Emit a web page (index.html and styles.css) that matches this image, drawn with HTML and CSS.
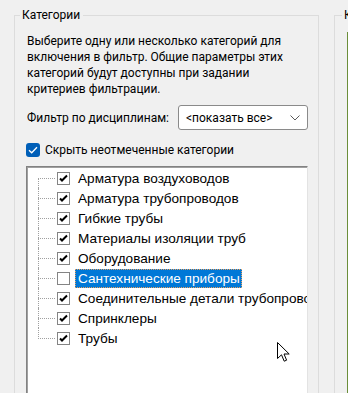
FILE: index.html
```html
<!DOCTYPE html>
<html lang="ru">
<head>
<meta charset="utf-8">
<link rel="stylesheet" href="styles.css">
</head>
<body>
<div class="page">
  <section class="group">
    <span class="group-title">Категории</span>
    <p class="intro">Выберите одну или несколько категорий для включения в фильтр. Общие параметры этих категорий будут доступны при задании критериев фильтрации.</p>
    <div class="filter-row">
      <span class="filter-label">Фильтр по дисциплинам:</span>
      <div class="combo">
        <span class="combo-text">&lt;показать все&gt;</span>
        <svg class="combo-arrow" width="10" height="6" viewBox="0 0 10 6"><path d="M0.5 0.5 L5 5 L9.5 0.5" fill="none" stroke="#5a5a5a" stroke-width="1"/></svg>
      </div>
    </div>
    <label class="hide-row">
      <span class="win-check">
        <svg width="10" height="8" viewBox="0 0 10 8"><path d="M1 4.2 L3.7 6.8 L9 1.2" fill="none" stroke="#fff" stroke-width="1.3"/></svg>
      </span>
      <span>Скрыть неотмеченные категории</span>
    </label>
    <div class="tree">
      <ul class="tree-list">
        <li class="node"><span class="box on"></span><span class="name">Арматура воздуховодов</span></li>
        <li class="node"><span class="box on"></span><span class="name">Арматура трубопроводов</span></li>
        <li class="node"><span class="box on"></span><span class="name">Гибкие трубы</span></li>
        <li class="node"><span class="box on"></span><span class="name">Материалы изоляции труб</span></li>
        <li class="node"><span class="box on"></span><span class="name">Оборудование</span></li>
        <li class="node"><span class="box"></span><span class="name selected">Сантехнические приборы</span></li>
        <li class="node"><span class="box on"></span><span class="name">Соединительные детали трубопроводов</span></li>
        <li class="node"><span class="box on"></span><span class="name">Спринклеры</span></li>
        <li class="node"><span class="box on"></span><span class="name">Трубы</span></li>
      </ul>
      <svg class="cursor" width="14" height="21" viewBox="0 0 14 21"><path d="M0.5 0.5 L0.5 16.5 L4.5 12.8 L7.2 19.2 L9.6 18.2 L7 12 L12.2 12 Z" fill="#fff" stroke="#000" stroke-width="1" stroke-linejoin="miter"/></svg>
    </div>
  </section>
  <section class="group group-2">
    <span class="group-title group-title-2">Категории</span>
    <div class="green-panel"></div>
  </section>
</div>
</body>
</html>
```

FILE: styles.css
```css
html, body {
  margin: 0;
  padding: 0;
  background: #f0f0f0;
  overflow: hidden;
}
body {
  width: 348px;
  height: 393px;
  font-family: Roboto, "Noto Sans", sans-serif;
  font-size: 12px;
  color: #000;
}
.page {
  display: flex;
  gap: 15px;
  padding: 15px 0 0 14px;
  width: 500px;
}
.group {
  display: flex;
  flex-direction: column;
  align-items: flex-start;
  border: 1px solid #dcdcdc;
  padding: 0 11px;
  width: 305px;
  height: 420px;
  box-sizing: border-box;
  flex: none;
}
.group-title {
  margin: -9px 0 0 -6px;
  padding: 0 3px 0 2px;
  background: #f0f0f0;
  line-height: 16px;
  white-space: nowrap;
}
.group-2 {
  width: 100px;
}
.group-title-2 {
  margin-left: -4px;
}
.green-panel {
  margin: 9px 0 0 1px;
  width: 10px;
  height: 400px;
  border-left: 1px solid #6b8e3a;
}
.intro {
  margin: 10px 0 0 1px;
  line-height: 16px;
}
.filter-row {
  display: flex;
  align-items: center;
  margin-top: 8px;
  padding-left: 1px;
}
.filter-label {
  width: 151px;
  flex: none;
}
.combo {
  width: 130px;
  height: 25px;
  box-sizing: border-box;
  background: #fff;
  border: 1px solid #8a8a8a;
  border-radius: 3px;
  display: flex;
  align-items: center;
  justify-content: space-between;
  padding: 0 7px 0 7px;
}
.combo-text {
  white-space: nowrap;
}
.hide-row {
  display: flex;
  align-items: center;
  gap: 5px;
  margin-top: 12px;
  height: 16px;
}
.win-check {
  width: 14px;
  height: 14px;
  box-sizing: border-box;
  background: #005fb8;
  border-radius: 3px;
  display: flex;
  align-items: center;
  justify-content: center;
}
.tree {
  position: relative;
  margin-top: 8px;
  width: 282px;
  height: 240px;
  flex: none;
  box-sizing: border-box;
  background: #fff;
  border-top: 1px solid #828282;
  border-left: 1px solid #828282;
  border-right: 1px solid #e3e3e3;
  overflow: hidden;
  box-shadow: inset 1px 1px 0 #a0a0a0;
  font-family: "Liberation Sans", Arial, sans-serif;
  font-size: 13.6px;
}
.tree-list {
  list-style: none;
  margin: 0;
  padding: 1px 0 0 0;
}
.node {
  position: relative;
  height: 20px;
  display: flex;
  align-items: center;
  padding-left: 30px;
  white-space: nowrap;
}
.node::before {
  content: "";
  position: absolute;
  left: 11px;
  top: 10px;
  width: 17px;
  border-top: 1px dotted #a0a0a0;
}
.node::after {
  content: "";
  position: absolute;
  left: 11px;
  top: 0;
  height: 20px;
  border-left: 1px dotted #a0a0a0;
}
.node:first-child::after {
  top: 10px;
  height: 10px;
}
.node:last-child::after {
  height: 11px;
}
.box {
  width: 13px;
  height: 13px;
  box-sizing: border-box;
  border: 1px solid #848484;
  background: #fff;
  flex: none;
  margin-right: 5px;
}
.box.on {
  background: #fff url("data:image/svg+xml;utf8,<svg xmlns='http://www.w3.org/2000/svg' width='11' height='11'><path d='M2 5.5 L4 7.5 L9 2.5' stroke='black' stroke-width='2' fill='none'/></svg>") no-repeat 0 0;
}
.name {
  padding: 2px 2px 2px 3px;
  line-height: 15px;
}
.name.selected {
  background: #0078d7;
  color: #fff;
  outline: 1px dotted #e8a060;
  outline-offset: -1px;
}
.cursor {
  position: absolute;
  left: 250px;
  top: 175px;
}
```
